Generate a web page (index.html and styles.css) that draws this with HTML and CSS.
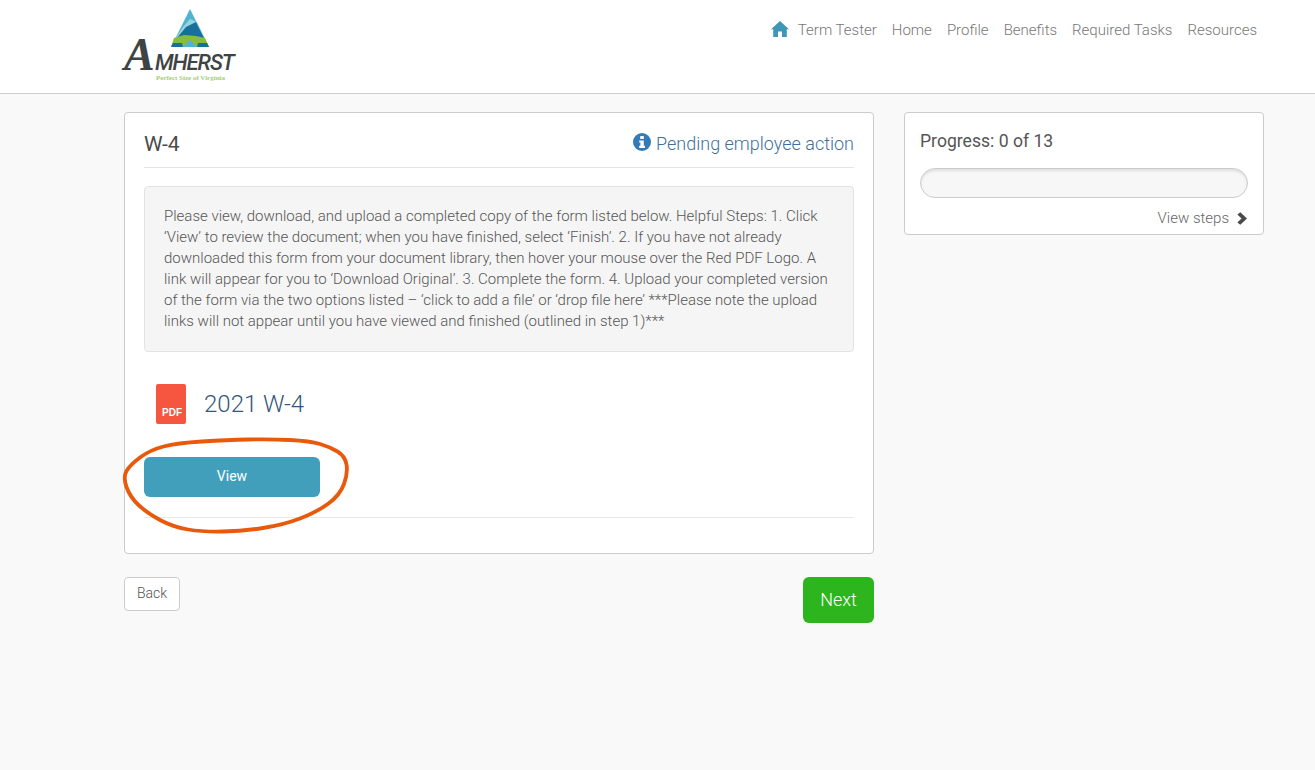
FILE: index.html
```html
<!DOCTYPE html>
<html>

<head>
  <meta charset="UTF-8">
  <title>W-4</title>
  <link rel="stylesheet" href="styles.css">
</head>

<body>

  <div class="topbar">
    <div class="logo">
      <svg class="logo_mark" width="60" height="40" viewBox="0 0 60 40">
        <polygon points="30,0 49,38 11,38" fill="#4fb4cf" />
        <polygon points="30,10 37,13 45,30 15,30 23,18" fill="#9ad3de" />
        <polygon points="16,30 26,18 36,13 44,29" fill="#17709c" />
        <polygon points="14,29 24,26 36,27 45,29 49,38 37,38 30,31 23,38 11,38" fill="#86bd3f" />
        <polygon points="13,34 22,34 23,38 11,38" fill="#17709c" />
        <polygon points="38,34 47,34 49,38 37,38" fill="#17709c" />
      </svg>
      <div class="logo_name"><span class="logo_a">A</span>MHERST</div>
      <div class="logo_tag">Perfect Size of Virginia</div>
    </div>

    <div class="nav">
      <svg class="nav_home" width="18" height="16" viewBox="0 0 18 16">
        <path d="M9 0 L18 8.2 L15.8 8.2 L15.8 16 L11 16 L11 10.5 L7 10.5 L7 16 L2.2 16 L2.2 8.2 L0 8.2 Z" fill="#3f97b5" />
      </svg>
      <a class="nav_user">Term Tester</a>
      <a>Home</a>
      <a>Profile</a>
      <a>Benefits</a>
      <a>Required Tasks</a>
      <a>Resources</a>
    </div>
  </div>

  <div class="page">
    <div class="main">
      <div class="card">
        <div class="card_head">
          <h2>W-4</h2>
          <div class="status">
            <svg width="18" height="18" viewBox="0 0 18 18">
              <circle cx="9" cy="9" r="9" fill="#337ab7" />
              <rect x="7.2" y="3" width="3.6" height="3" rx="0.6" fill="#fff" />
              <path d="M6.2 7.4 H10.8 V12.8 H12 V15 H6.2 V12.8 H7.4 V9.6 H6.2 Z" fill="#fff" />
            </svg>
            <span>Pending employee action</span>
          </div>
        </div>

        <div class="well">Please view, download, and upload a completed copy of the form listed below. Helpful Steps: 1. Click ‘View’ to review the document; when you have finished, select ‘Finish’. 2. If you have not already downloaded this form from your document library, then hover your mouse over the Red PDF Logo. A link will appear for you to ‘Download Original’. 3. Complete the form. 4. Upload your completed version of the form via the two options listed – ‘click to add a file’ or ‘drop file here’ ***Please note the upload links will not appear until you have viewed and finished (outlined in step 1)***</div>

        <div class="doc">
          <div class="pdf">PDF</div>
          <a class="doc_name">2021 W-4</a>
        </div>

        <button class="btn_view">View</button>
        <div class="doc_end"></div>

        <svg class="scribble" width="240" height="104" viewBox="0 0 240 104">
          <path d="M216.5 14.5 Q209 10 199 7 Q189 4 169 3 Q149 2 127.5 2.5 Q106 3 81 4.5 Q56 6 42.5 9.5 Q29 13 19 20.5 Q9 28 5.5 34 Q2 40 5.5 50 Q9 60 17.5 68 Q26 76 39 83 Q52 90 67 92.5 Q82 95 102 94.5 Q122 94 142 91 Q162 88 179 81.5 Q196 75 207.5 66.5 Q219 58 223 47 Q227 36 225.5 27.5 Q224 19 216.5 14.5" fill="none" stroke="#e8590c" stroke-width="3.8" stroke-linecap="round" />
        </svg>
      </div>

      <div class="actions">
        <button class="btn_back">Back</button>
        <button class="btn_next">Next</button>
      </div>
    </div>

    <div class="side">
      <div class="progress_title">Progress: 0 of 13</div>
      <div class="progress_bar"></div>
      <div class="steps">
        <span>View steps</span>
        <svg width="10" height="13" viewBox="0 0 11 14">
          <path d="M3.6 0 L11 7 L3.6 14 L0.4 11.4 L5 7 L0.4 2.6 Z" fill="#4a4a4a" />
        </svg>
      </div>
    </div>
  </div>

</body>

</html>
```

FILE: styles.css
```css
body {
  margin: 0;
  background-color: #f9f9f9;
  color: #555;
  font-family: Roboto, "Liberation Sans", sans-serif;
  font-weight: 300;
  font-size: 15px;
}

h2 {
  margin: 0;
  font-size: 21px;
  font-weight: 400;
  color: #4a4a4a;
}

.topbar {
  display: flex;
  justify-content: space-between;
  height: 93px;
  padding: 0 58px 0 124px;
  background-color: #fff;
  border-bottom: 1px solid #ccc;
}

.logo {
  width: 112px;
  padding-top: 9px;
}

.logo_mark {
  display: block;
  margin-left: 36px;
}

.logo_name {
  display: flex;
  align-items: baseline;
  margin-top: -12px;
  color: #3d4443;
  font-style: italic;
  font-weight: 500;
  font-size: 22px;
  line-height: 36px;
  letter-spacing: -1.1px;
  white-space: nowrap;
}

.logo_a {
  width: 31px;
  font-family: "Liberation Serif", serif;
  font-weight: 700;
  font-size: 46px;
}

.logo_tag {
  margin-top: -6px;
  margin-left: 32px;
  color: #a3cf78;
  font-family: "Liberation Serif", serif;
  font-weight: 700;
  font-size: 7px;
  line-height: 7px;
  white-space: nowrap;
}

.nav {
  display: flex;
  align-items: center;
  gap: 15px;
  height: 59px;
  font-size: 15px;
  color: #777;
}

.nav_home {
  margin-right: -6px;
  margin-top: -2px;
}

.page {
  display: flex;
  align-items: flex-start;
  gap: 30px;
  width: 1140px;
  margin: 18px 0 0 124px;
}

.main {
  width: 750px;
}

.card {
  position: relative;
  box-sizing: border-box;
  height: 442px;
  padding: 0 19px;
  background-color: #fff;
  border: 1px solid #ccc;
  border-radius: 4px;
}

.card_head {
  display: flex;
  justify-content: space-between;
  align-items: center;
  box-sizing: border-box;
  height: 55px;
  padding-top: 7px;
  border-bottom: 1px solid #e6e6e6;
}

.status {
  display: flex;
  align-items: center;
  gap: 5px;
  font-size: 18px;
  color: #3f6f9a;
}

.status svg {
  margin-top: -4px;
}

.well {
  box-sizing: border-box;
  height: 166px;
  margin-top: 18px;
  padding: 19px 19px;
  background-color: #f5f5f5;
  border: 1px solid #e3e3e3;
  border-radius: 4px;
  line-height: 21px;
}

.doc {
  display: flex;
  align-items: center;
  gap: 18px;
  margin: 32px 0 0 12px;
}

.pdf {
  box-sizing: border-box;
  width: 30px;
  height: 40px;
  padding: 23px 0 0 6px;
  background-color: #f6553f;
  border-radius: 2px;
  color: #fff;
  font-family: "Liberation Sans", sans-serif;
  font-weight: 700;
  font-size: 10px;
  line-height: 12px;
}

.doc_name {
  font-size: 24px;
  color: #34577a;
}

.btn_view {
  display: block;
  width: 176px;
  height: 40px;
  margin-top: 33px;
  padding: 0 0 2px;
  background-color: #419fbb;
  border: 0;
  border-radius: 6px;
  color: #fff;
  font-family: Roboto, sans-serif;
  font-size: 14px;
  font-weight: 400;
}

.doc_end {
  margin-top: 20px;
  border-top: 1px solid #e9e9e9;
}

.scribble {
  position: absolute;
  left: -4px;
  top: 324px;
}

.actions {
  display: flex;
  justify-content: space-between;
  align-items: flex-start;
  margin-top: 23px;
}

.btn_back {
  width: 56px;
  height: 34px;
  padding: 0 0 2px;
  background-color: #fff;
  border: 1px solid #ccc;
  border-radius: 4px;
  color: #555;
  font-family: Roboto, sans-serif;
  font-size: 14px;
  font-weight: 300;
}

.btn_next {
  width: 71px;
  height: 46px;
  padding: 0 0 2px;
  background-color: #2db51d;
  border: 0;
  border-radius: 6px;
  color: #fff;
  font-family: Roboto, sans-serif;
  font-size: 18px;
  font-weight: 300;
}

.side {
  box-sizing: border-box;
  width: 360px;
  height: 123px;
  padding: 0 15px;
  background-color: #fff;
  border: 1px solid #ccc;
  border-radius: 4px;
}

.progress_title {
  margin-top: 17px;
  font-size: 17.6px;
  font-weight: 400;
  line-height: 23px;
  color: #555;
}

.progress_bar {
  box-sizing: border-box;
  height: 30px;
  margin-top: 15px;
  background-color: #f7f7f7;
  border: 1px solid #ccc;
  border-radius: 15px;
  box-shadow: inset 0 2px 3px rgba(0, 0, 0, 0.1);
}

.steps {
  display: flex;
  justify-content: flex-end;
  align-items: center;
  gap: 8px;
  margin-top: 10px;
  padding-right: 1px;
  line-height: 20px;
  color: #666;
}
```
